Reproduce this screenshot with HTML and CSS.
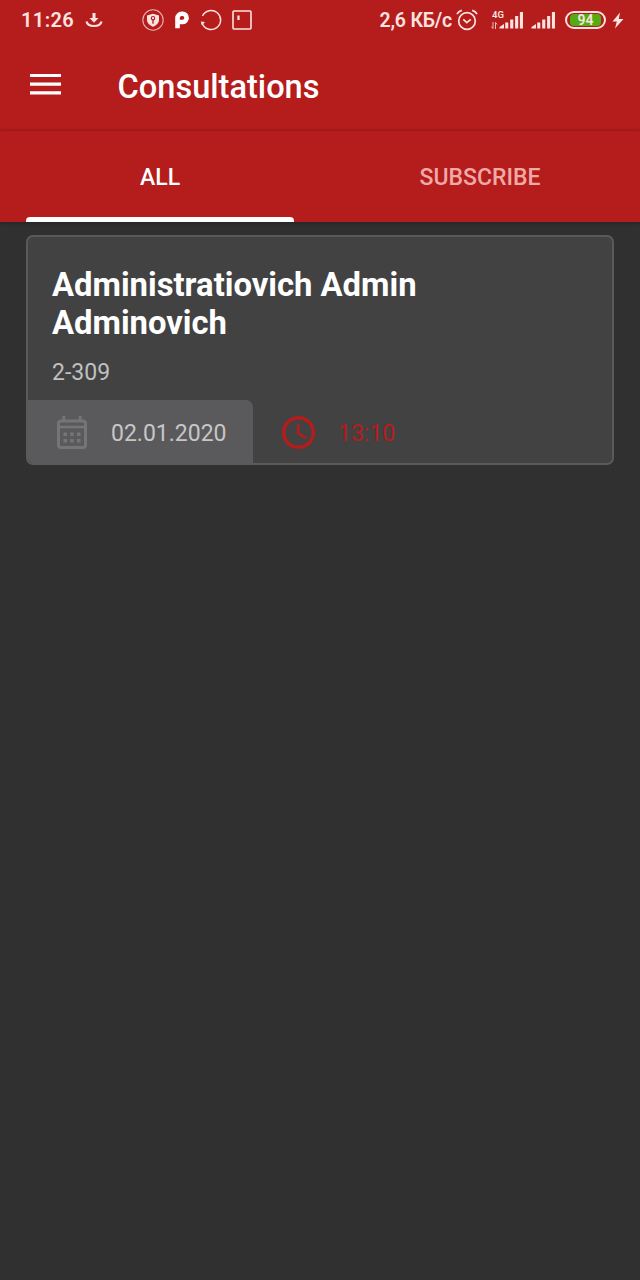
FILE: index.html
```html
<!DOCTYPE html>
<html lang="en">
<head>
    <meta charset="UTF-8">
    <meta name="viewport" content="width=device-width, initial-scale=1.0">
    <title>Consultations</title>
    <link rel="stylesheet" href="styles.css">
</head>
<body>
    <div class="status-bar">
        <span class="time">11:26</span>
        <svg class="icon-download" width="18" height="18" viewBox="0 0 18 18">
            <path d="M7.500 2h3v5h3L9 11.800 4.500 7h3z" fill="currentColor"/>
            <path d="M1.500 10.500c1.300 6 13.700 6 15 0" fill="none" stroke="currentColor" stroke-width="2.200"/>
        </svg>
        <div class="notifications">
            <svg width="22" height="22" viewBox="0 0 22 22">
                <circle cx="11" cy="11" r="10.200" fill="none" stroke="currentColor" stroke-width="1.100" opacity=".75"/>
                <path d="M11 4.800l6 1.600v4.400c0 3.300-2.600 5.500-6 7-3.400-1.500-6-3.700-6-7V6.400z" fill="currentColor"/>
                <circle cx="11" cy="9.200" r="1.700" fill="none" stroke="#b51c1c" stroke-width="1.100"/>
                <path d="M11 11v3.700" stroke="#b51c1c" stroke-width="1.300"/>
            </svg>
            <svg width="16" height="22" viewBox="0 0 16 22">
                <path d="M3.500 19.300V9a4.200 4.200 0 0 1 4.200-4.200h.800a4 4 0 0 1 0 8.200H4" fill="none" stroke="#fff" stroke-width="4.600"/>
            </svg>
            <svg width="22" height="22" viewBox="0 0 22 22">
                <path d="M2.100 14A9.500 9.500 0 1 0 2.500 7" fill="none" stroke="currentColor" stroke-width="1.500"/>
                <path d="M.800 12.600l4.200.400-3.200 3.500z" fill="currentColor"/>
            </svg>
            <svg width="20" height="20" viewBox="0 0 20 20">
                <rect x="1" y="1" width="18" height="18" rx="1" fill="none" stroke="currentColor" stroke-width="1.600"/>
                <path d="M6.500 5.500v4.500" stroke="currentColor" stroke-width="2.200"/>
            </svg>
        </div>
        <div class="system">
            <span class="speed">2,6 КБ/с</span>
            <svg class="icon-alarm" width="22" height="22" viewBox="0 0 22 22">
                <g fill="none" stroke="currentColor" stroke-width="1.700">
                    <circle cx="11" cy="12" r="8.300"/>
                    <path d="M7.300 10.300l3.500 3.400 4-3.400M1 5.200C2 3.200 3.500 2 5.800 1.400M21 5.200C20 3.200 18.500 2 16.200 1.400"/>
                </g>
            </svg>
            <div class="network">
                <span class="network-type">4G</span>
                <svg width="7" height="7" viewBox="0 0 7 7">
                    <path d="M2 0v6.500L.300 4.500M4.500 7V.500L6.200 2.500" fill="none" stroke="currentColor" stroke-width=".8"/>
                </svg>
            </div>
            <svg class="icon-signal" width="25" height="18" viewBox="0 0 25 18">
                <path d="M.500 17.500v-1.500L5 13v4.500zM6.200 11.500h3.100v6H6.200zM11.200 8.500h3.100v9h-3.100zM16.100 5h3.100v12.500h-3.100zM20.900 1H24v16.500h-3.100z" fill="currentColor"/>
            </svg>
            <svg class="icon-signal second" width="25" height="18" viewBox="0 0 25 18">
                <path d="M.500 17.500v-1.500L5 13v4.500zM6.200 11.500h3.100v6H6.200zM11.200 8.500h3.100v9h-3.100zM16.100 5h3.100v12.500h-3.100zM20.900 1H24v16.500h-3.100z" fill="currentColor"/>
            </svg>
            <span class="battery"><span class="battery-level">94</span></span>
            <svg class="icon-charge" width="12" height="17" viewBox="0 0 12 17">
                <path d="M8 .500L.500 9.500h4.300L3 16.500 11.500 7H6.800z" fill="currentColor"/>
            </svg>
        </div>
    </div>

    <div class="header">
        <svg class="menu" width="32" height="22" viewBox="0 0 32 22">
            <path d="M0 1.500h31M0 10.200h31M0 18.900h31" stroke="#fff" stroke-width="3.200"/>
        </svg>
        <h1>Consultations</h1>
    </div>

    <div class="tabs">
        <div class="tab active">ALL</div>
        <div class="tab">SUBSCRIBE</div>
    </div>

    <div class="container">
        <div class="card">
            <div class="card-body">
                <h2>Administratiovich Admin Adminovich</h2>
                <p class="room">2-309</p>
            </div>
            <div class="card-footer">
                <div class="date">
                    <svg width="30" height="34" viewBox="0 0 30 34">
                        <rect x="1.500" y="5" width="27" height="26.500" rx="2.500" fill="none" stroke="currentColor" stroke-width="3"/>
                        <path d="M6.800 0v5M23.200 0v5" stroke="currentColor" stroke-width="3"/>
                        <path d="M2 11h26" stroke="currentColor" stroke-width="2.500"/>
                        <path d="M6.500 18.200H10M13.200 18.200h3.500M20 18.200h3.500M6.500 24.700H10M13.200 24.700h3.500M20 24.700h3.500" stroke="currentColor" stroke-width="3.400"/>
                    </svg>
                    <span>02.01.2020</span>
                </div>
                <div class="hour">
                    <svg width="34" height="34" viewBox="0 0 34 34">
                        <circle cx="16.500" cy="16.500" r="14.800" fill="none" stroke="currentColor" stroke-width="3.400"/>
                        <path d="M16.300 8v9.200l7.700 4.800" fill="none" stroke="currentColor" stroke-width="2.600"/>
                    </svg>
                    <span>13:10</span>
                </div>
            </div>
        </div>
    </div>
</body>
</html>
```
FILE: styles.css
```css
* {
    margin: 0;
    padding: 0;
    box-sizing: border-box;
}

body {
    font-family: Roboto, "Liberation Sans", sans-serif;
    background: #303030;
    color: #fff;
    min-height: 1280px;
}

svg {
    display: block;
    flex-shrink: 0;
}

.status-bar {
    display: flex;
    align-items: center;
    height: 40px;
    padding: 0 16px 0 21px;
    background: #b51c1c;
    color: #fbe3e0;
    font-size: 20px;
    font-weight: 600;
}

.time {
    width: 64px;
    letter-spacing: 0.4px;
}

.notifications {
    display: flex;
    align-items: center;
    gap: 10px;
    margin-left: 39px;
}

.system {
    display: flex;
    align-items: center;
    margin-left: auto;
}

.speed {
    white-space: nowrap;
    font-size: 19.5px;
    letter-spacing: -0.2px;
}

.icon-alarm {
    margin-left: 4px;
}

.network {
    display: flex;
    flex-direction: column;
    width: 8px;
    height: 18px;
    margin-left: 13px;
}

.network-type {
    height: 11px;
    padding-left: 1px;
    font-size: 9.5px;
    line-height: 7px;
}

.icon-signal.second {
    margin-left: 7px;
}

.battery {
    width: 41px;
    height: 18px;
    margin-left: 9px;
    padding: 1px 3px;
    border: 2px solid #fbe3e0;
    border-radius: 9px;
}

.battery-level {
    display: block;
    height: 12px;
    background: #55ab13;
    border-radius: 4px;
    font-size: 14px;
    line-height: 13px;
    text-align: center;
}

.icon-charge {
    margin-left: 6px;
}

.header {
    display: flex;
    align-items: center;
    height: 91px;
    padding: 0 30px 2px;
    background: #b51c1c;
    box-shadow: inset 0 -2px 2px -1px rgba(0,0,0,0.06);
}

.header h1 {
    margin: 4px 0 0 55.5px;
    font-size: 32.6px;
    font-weight: 500;
}

.tabs {
    display: flex;
    height: 91px;
    background: #b51c1c;
    box-shadow: 0 1px 4px rgba(0,0,0,0.3);
}

.tab {
    flex: 1;
    padding-top: 33px;
    font-size: 23px;
    font-weight: 500;
    line-height: 28px;
    text-align: center;
    color: #f0a9a5;
}

.tab.active {
    position: relative;
    color: #fff;
}

.tab.active::after {
    content: "";
    position: absolute;
    left: 26px;
    right: 26px;
    bottom: 0;
    height: 5px;
    background: #fff;
    border-radius: 4px 4px 0 0;
}

.container {
    padding: 13px 26px;
}

.card {
    display: flex;
    flex-direction: column;
    justify-content: space-between;
    height: 230px;
    background: #424242;
    border: 2px solid #5a5a5b;
    border-radius: 7px;
    overflow: hidden;
}

.card-body {
    padding: 29px 24px 0;
}

.card h2 {
    font-size: 32.8px;
    font-weight: 700;
    line-height: 38px;
}

.room {
    margin-top: 17px;
    font-size: 23px;
    line-height: 28px;
    color: #c0c0c0;
}

.card-footer {
    display: flex;
    height: 63px;
    font-size: 23px;
}

.date,
.hour {
    display: flex;
    align-items: center;
    padding: 2px 0 0 29px;
}

.date {
    gap: 24px;
    width: 225px;
    background: #5a5a5c;
    border-top-right-radius: 7px;
    color: #c6c6c6;
}

.date span,
.hour span {
    padding-top: 2px;
}

.date svg {
    color: #757575;
}

.hour {
    gap: 22px;
    color: #b51c1c;
}
```
